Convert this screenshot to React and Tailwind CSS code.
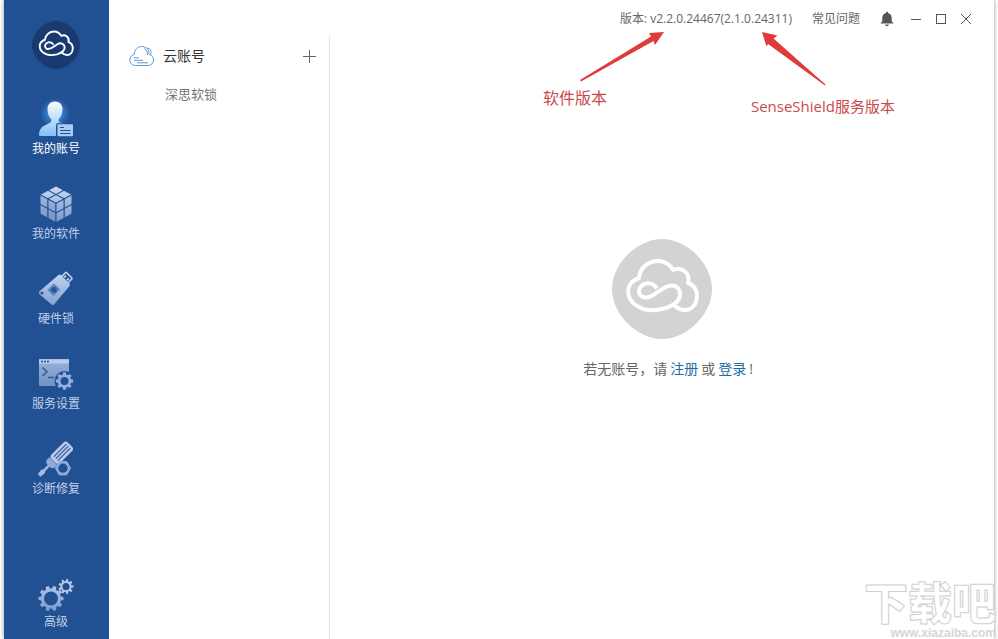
import React from "react";

const NAV_ITEMS = [
  { id: "account", label: "我的账号", icon: AccountIcon },
  { id: "software", label: "我的软件", icon: SoftwareIcon },
  { id: "dongle", label: "硬件锁", icon: DongleIcon },
  { id: "service", label: "服务设置", icon: ServiceIcon },
  { id: "repair", label: "诊断修复", icon: RepairIcon },
];

// Closed outline of a gear, teeth slightly tapered
function gearPath(cx, cy, inner, outer, teeth) {
  const step = (Math.PI * 2) / teeth;
  const points = [];
  for (let i = 0; i < teeth; i++) {
    const a = i * step;
    [
      [inner, -0.32],
      [outer, -0.2],
      [outer, 0.2],
      [inner, 0.32],
    ].forEach(([r, k]) => {
      const x = cx + r * Math.cos(a + k * step);
      const y = cy + r * Math.sin(a + k * step);
      points.push(`${x.toFixed(2)} ${y.toFixed(2)}`);
    });
  }
  return `M${points.join("L")}Z`;
}

function ringPath(cx, cy, r) {
  return `M${cx - r} ${cy}a${r} ${r} 0 1 0 ${r * 2} 0a${r} ${r} 0 1 0 ${-r * 2} 0Z`;
}

function IconFrame({ id, children, from = "#cbdaf2", to = "#7c9cd0" }) {
  return (
    <svg viewBox="0 0 36 38" className="h-[38px] w-9 overflow-visible" aria-hidden="true">
      <defs>
        <linearGradient id={id} x1="0" y1="0" x2="0" y2="38" gradientUnits="userSpaceOnUse">
          <stop offset="0" stopColor={from} />
          <stop offset="1" stopColor={to} />
        </linearGradient>
      </defs>
      {children}
    </svg>
  );
}

function AccountIcon() {
  return (
    <IconFrame id="g-account" from="#ffffff" to="#7dbcf8">
      <defs>
        <radialGradient id="g-account-glow">
          <stop offset="0.4" stopColor="#3f93f5" stopOpacity="0.75" />
          <stop offset="1" stopColor="#3f93f5" stopOpacity="0" />
        </radialGradient>
      </defs>
      <circle cx="17" cy="13" r="15" fill="url(#g-account-glow)" />
      <path
        d="M17 1.500C21.500 1.500 24.500 4.500 24.500 9C24.500 13.500 23 17 20.500 19.500C20.500 21.300 21.500 22.300 23.500 22.800H20.500Q18 22.800 18 25.300V36H2Q.8 36 1 34.500C1.500 29 4 26.500 8 24.800C11 23.500 13.500 22.500 13.500 19.500C11 17 9.500 13.500 9.500 9C9.500 4.500 12.500 1.500 17 1.500Z"
        fill="url(#g-account)"
      />
      <rect x="19.500" y="24.300" width="15.500" height="12" rx="1" fill="#a5cdf8" />
      <path d="M22 27.500h4M22 30.500h10.500M22 33.500h10.500" stroke="#225193" strokeWidth="1.200" />
    </IconFrame>
  );
}

function SoftwareIcon() {
  const cells = [];
  const addFace = (ox, oy, ux, uy, vx, vy, opacity) => {
    for (let i = 0; i < 2; i++) {
      for (let j = 0; j < 2; j++) {
        const x = ox + ux * i + vx * j;
        const y = oy + uy * i + vy * j;
        cells.push({
          d: `M${x} ${y}l${ux} ${uy}l${vx} ${vy}l${-ux} ${-uy}Z`,
          opacity,
        });
      }
    }
  };
  addFace(18, 1, 8, 4.3, -8, 4.3, 1);
  addFace(2, 9.8, 8, 4.3, 0, 9.6, 0.85);
  addFace(34, 9.8, -8, 4.3, 0, 9.6, 0.95);

  return (
    <IconFrame id="g-software">
      {cells.map((cell) => (
        <path
          key={cell.d}
          d={cell.d}
          fill="url(#g-software)"
          fillOpacity={cell.opacity}
          stroke="#225193"
          strokeWidth="1"
          strokeLinejoin="round"
        />
      ))}
    </IconFrame>
  );
}

function DongleIcon() {
  return (
    <IconFrame id="g-dongle">
      <g transform="translate(16 20.500) rotate(-45)">
        <rect x="12" y="-4.500" width="9.500" height="9" rx="1" fill="#225193" stroke="#b9cceb" strokeWidth="1.600" />
        <rect x="16.500" y="-3" width="2.500" height="2" fill="#b9cceb" />
        <rect x="16.500" y="1" width="2.500" height="2" fill="#b9cceb" />
      </g>
      <path
        d="M20.500 5Q21.700 3.900 22.900 5L31.500 13.500Q32.500 14.700 31.500 15.900L16 34.500Q14.700 35.700 13.500 34.500L1.800 24.500Q.6 23.400 1.200 21.500Z"
        fill="url(#g-dongle)"
      />
      <circle cx="4" cy="23" r="1.500" fill="#225193" />
      <path d="M16 13.500L22 19.500L15.500 26L9.500 20Z" fill="#5c80bb" />
      <circle cx="16" cy="19.700" r="2.800" fill="#2a5799" />
    </IconFrame>
  );
}

function ServiceIcon() {
  return (
    <IconFrame id="g-service">
      <rect x="1" y="4" width="30" height="27" rx="1" fill="url(#g-service)" fillOpacity="0.75" />
      <path d="M1 4.500h30v4h-30Z" fill="#b9cceb" />
      <path d="M3 6.500h2M6 6.500h2M9 6.500h2" stroke="#225193" strokeWidth="1.600" />
      <path d="M4.500 12.500l4.500 4.200l-4.500 4.200M10 22.500h6" fill="none" stroke="#2f5b9c" strokeWidth="1.500" />
      <circle cx="26.500" cy="26" r="10" fill="#225193" />
      <path
        d={gearPath(26.5, 26, 6.8, 8.8, 8) + ringPath(26.5, 26, 4)}
        fill="#92aedb"
        fillRule="evenodd"
      />
    </IconFrame>
  );
}

function RepairIcon() {
  return (
    <IconFrame id="g-repair">
      <g transform="translate(1.500 35) rotate(-45)">
        <path d="M-.5 -1.800L5 -2.600L7 -1.200H15V1.200H7L5 2.600L-.5 1.800Z" fill="#a3bbe3" />
        <path d="M13 -3L15 -5.500H19.500V5.500H15L13 3Z" fill="#8eabd9" />
        <rect x="20" y="-6" width="23" height="12" rx="3" fill="#bccdeb" />
        <path d="M23 -2.800H41M23 0H41M23 2.800H41" stroke="#3d66a5" strokeWidth="1.200" />
      </g>
      <path
        d="M21.300 21.500H28.700L32.600 28.200L28.700 34.900H21.300L17.400 28.200Z"
        fill="#8eabd9"
        stroke="#8eabd9"
        strokeWidth="1"
        strokeLinejoin="round"
      />
      <circle cx="25" cy="28.200" r="4.600" fill="#225193" />
    </IconFrame>
  );
}

function AdvancedIcon() {
  return (
    <IconFrame id="g-advanced">
      <path
        d={gearPath(13, 25.5, 10, 12.6, 10) + ringPath(13, 25.5, 7)}
        fill="url(#g-advanced)"
        fillRule="evenodd"
      />
      <path
        d={gearPath(28, 13.5, 5.6, 7.6, 9) + ringPath(28, 13.5, 3.6)}
        fill="#b3c7e8"
        fillRule="evenodd"
      />
    </IconFrame>
  );
}

function BrandMark({ className, plate, stroke = "#ffffff" }) {
  return (
    <svg viewBox="0 0 100 100" className={className} aria-hidden="true">
      <path d="M50 0C75 0 100 25 100 50C100 75 75 100 50 100C25 100 0 75 0 50C0 25 25 0 50 0Z" fill={plate} />
      <path
        d="M45 49.500C42 45 38 43.500 34 44.500C26.500 46.500 25 54 30 57.500C37 61.500 45 53 52 49C60 44 67 47 68 54C69 62 60 67 52 69.500C42 72 34 72 27 68C13 61 12 44 27 39C28 28 37 22 46 22C53 22 58 26 61 31C69 27 79 34 76 44C82 46 85 51 85 57C85 65 80 71 73 71C68 71 65 69 62 66"
        fill="none"
        stroke={stroke}
        strokeWidth="4"
        strokeLinejoin="round"
      />
    </svg>
  );
}

function NavButton({ label, icon: Icon, active }) {
  return (
    <button
      type="button"
      className={`flex w-full flex-col items-center text-xs leading-[22px] ${active ? "text-white" : "text-[#c0d0ea]"}`}
    >
      <Icon />
      <span>{label}</span>
    </button>
  );
}

function Sidebar() {
  return (
    <nav className="flex w-[105px] shrink-0 flex-col items-center bg-[#225193] pt-[21px] pr-px pb-1.5">
      <BrandMark className="size-12" plate="#183a70" />
      <div className="mt-[31px] flex w-full flex-col gap-[25px]">
        {NAV_ITEMS.map((item) => (
          <NavButton key={item.id} label={item.label} icon={item.icon} active={item.id === "account"} />
        ))}
      </div>
      <div className="mt-auto w-full">
        <NavButton label="高级" icon={AdvancedIcon} />
      </div>
    </nav>
  );
}

function AccountPanel() {
  return (
    <aside className="mt-9 w-[221px] shrink-0 border-r border-[#e3e3e3] pr-3 pl-5">
      <div className="flex h-10 items-center">
        <svg viewBox="0 0 26 22" className="h-[22px] w-[26px]" fill="none" stroke="#5b9bd5" aria-hidden="true">
          <path d="M6.500 20.500C3 20.500 .8 18.300 .8 15.200C.8 12.200 2.800 10 5.500 9.500C5.300 4.800 8.500 1.500 12.800 1.500C16.200 1.500 18.700 3.400 19.800 6.500C19.800 8.300 20 8.800 20.500 9.500C23 10.200 24.500 12.200 24.500 15C24.500 18.200 22.200 20.500 18.800 20.500Z" />
          <path d="M15 3.500C17.500 5 18.800 7 18.500 10M18 3C21 3 22.500 5.500 22 8.500C21.800 9.500 21.300 10 20.500 9.500M5 12.800h5M5 15.300h9M8 17.800h11" />
        </svg>
        <h2 className="ml-2 text-sm text-[#333333]">云账号</h2>
        <button type="button" aria-label="添加账号" className="ml-auto">
          <svg viewBox="0 0 15 15" className="size-[15px]" stroke="#666666" aria-hidden="true">
            <path d="M7.500 1v13M1 7.500h13" />
          </svg>
        </button>
      </div>
      <ul>
        <li>
          <button type="button" className="block pl-9 text-[13px] leading-9 text-[#777777]">
            深思软锁
          </button>
        </li>
      </ul>
    </aside>
  );
}

function VersionInfo() {
  return (
    <div className="relative whitespace-nowrap">
      版本: v2.2.0.24467(2.1.0.24311)
      {/* Callouts hang off the version string */}
      <svg
        viewBox="0 0 280 60"
        className="pointer-events-none absolute top-[19px] left-[-44px] h-[60px] w-[280px]"
        fill="#e03b3b"
        aria-hidden="true"
      >
        <path d="M4 50L75 6.500L73 3L88 2L79 15L77.500 11L5 51.500Z" />
        <path d="M249 55.500L192 14L190.500 16.500L186 2L201.500 5.500L197.500 8.500L249.500 54.500Z" />
      </svg>
      <span className="absolute top-[75px] left-[-77px] text-base text-[#c94a4a]">软件版本</span>
      <span className="absolute top-[83px] left-[131px] text-[15px] leading-6 text-[#c94a4a]">SenseShield服务版本</span>
    </div>
  );
}

function TitleBar() {
  return (
    <header className="flex h-[38px] items-center justify-end pr-[22px] text-xs text-[#666666]">
      <VersionInfo />
      <a href="#faq" className="ml-5">
        常见问题
      </a>
      <button type="button" aria-label="通知" className="ml-5">
        <svg viewBox="0 0 14 16" className="h-4 w-3.5" fill="#555555" aria-hidden="true">
          <path d="M7 .5Q8 .5 8 2C10.500 2.500 11.700 4.500 11.700 7V10L13.500 12.500H.5L2.300 10V7C2.300 4.500 3.500 2.500 6 2Q6 .5 7 .5ZM5 13.500H9Q8.500 15.300 7 15.300T5 13.500Z" />
        </svg>
      </button>
      <div className="ml-4 flex items-center gap-[13px]">
        <button type="button" aria-label="最小化">
          <svg viewBox="0 0 12 12" className="size-3" stroke="#555555" aria-hidden="true">
            <path d="M1 6.500h10" />
          </svg>
        </button>
        <button type="button" aria-label="最大化">
          <svg viewBox="0 0 12 12" className="size-3" fill="none" stroke="#555555" aria-hidden="true">
            <rect x="1.500" y="1.500" width="9" height="9" />
          </svg>
        </button>
        <button type="button" aria-label="关闭">
          <svg viewBox="0 0 12 12" className="size-3" stroke="#555555" aria-hidden="true">
            <path d="M1 1l10 10M11 1L1 11" />
          </svg>
        </button>
      </div>
    </header>
  );
}

function EmptyState() {
  return (
    <div className="flex flex-1 flex-col items-center justify-center pb-15">
      <BrandMark className="size-[100px]" plate="#d3d3d3" />
      <p className="mt-5 pl-3 text-sm text-[#666666]">
        若无账号，请
        <a href="#register" className="mx-[3px] text-[#1b6ba5]">
          注册
        </a>
        或
        <a href="#login" className="mx-[3px] text-[#1b6ba5]">
          登录
        </a>
        !
      </p>
    </div>
  );
}

function Watermark() {
  return (
    <div className="pointer-events-none absolute right-0.5 bottom-0 text-right font-black text-white">
      <div className="text-[44px] leading-12 [-webkit-text-stroke:1px_#cfcfcf]">下载吧</div>
      <div className="font-['Liberation_Sans'] text-xs leading-3 font-bold text-[#d6d6d6]">www.xiazaiba.com</div>
    </div>
  );
}

export default function App() {
  return (
    <div className="relative flex min-h-screen bg-white px-1 font-['Open_Sans','Noto_Sans_CJK_SC',sans-serif]">
      <div className="flex flex-1 bg-white shadow-[0_0_4px_rgba(0,0,0,0.45)]">
        <Sidebar />
        <div className="flex min-w-0 flex-1">
          <AccountPanel />
          <main className="flex min-w-0 flex-1 flex-col">
            <TitleBar />
            <EmptyState />
          </main>
        </div>
      </div>
      <Watermark />
    </div>
  );
}
